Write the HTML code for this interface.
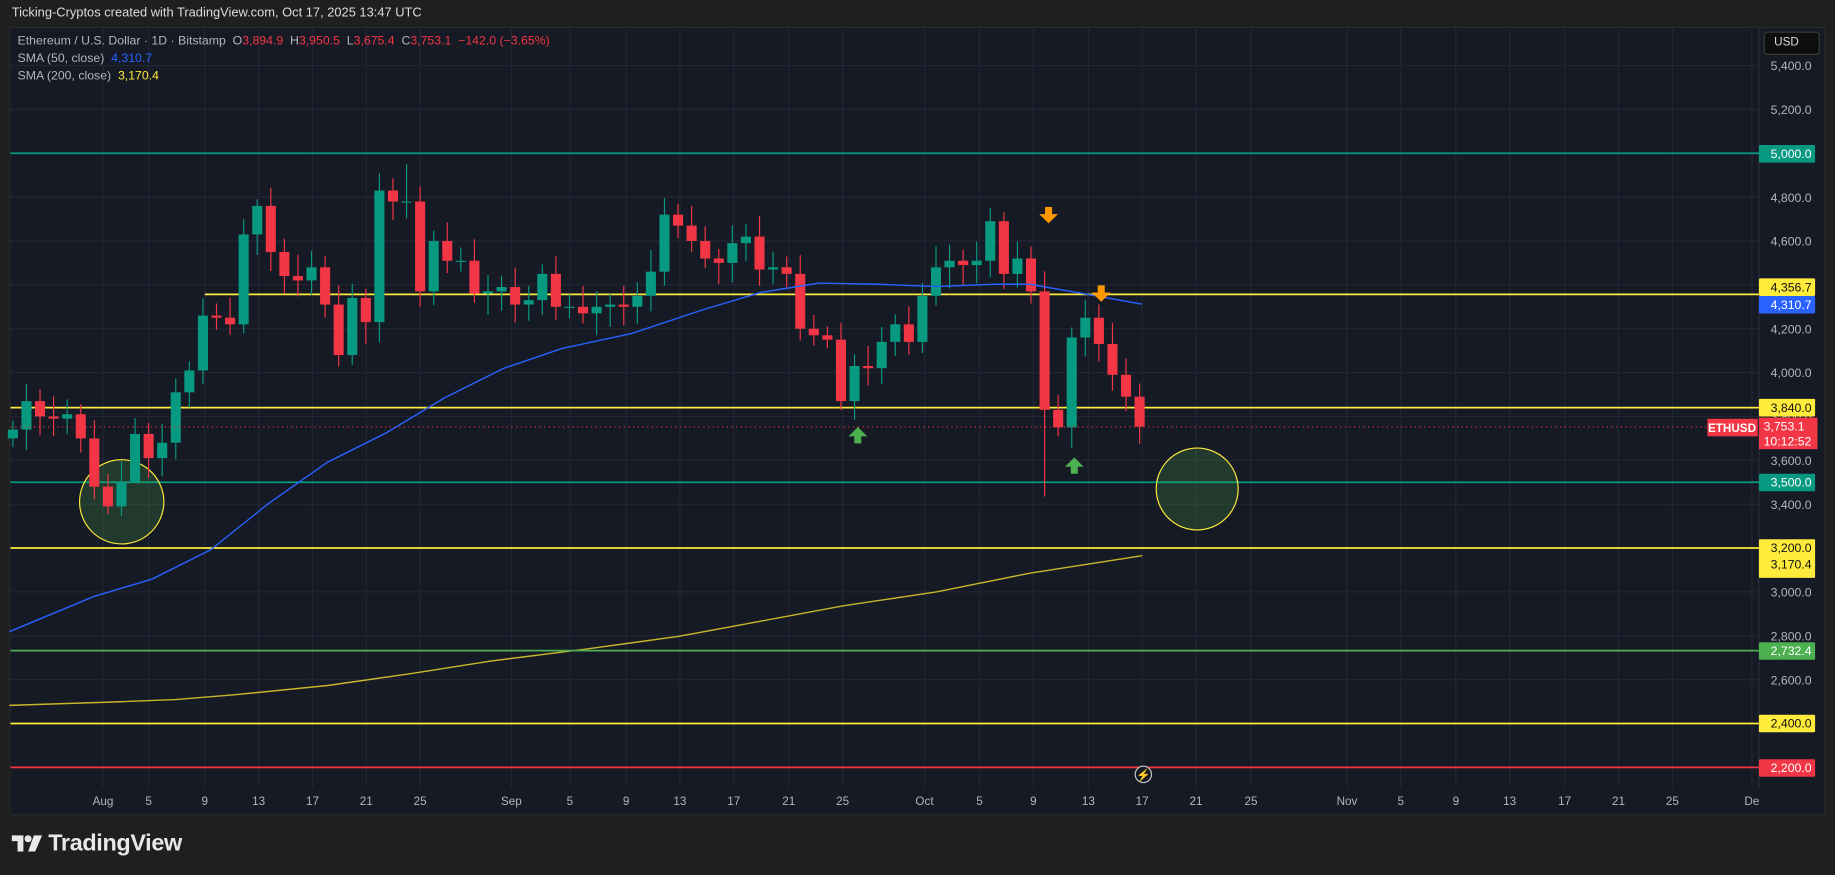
<!DOCTYPE html>
<html><head><meta charset="utf-8">
<style>
html,body{margin:0;padding:0;background:#1f1f1f;width:1835px;height:875px;overflow:hidden}
#w{position:absolute;left:0;top:0;width:1568px;height:748px;transform:scale(1.17028,1.16979);transform-origin:0 0;font-family:"Liberation Sans",sans-serif}
.t{position:absolute;white-space:nowrap}
</style></head><body>
<div id="w">
<div class="t" style="left:10px;top:5px;font-size:11px;color:#dcdcdc">Ticking-Cryptos created with TradingView.com, Oct 17, 2025 13:47 UTC</div>
<div style="position:absolute;left:8px;top:23px;width:1552px;height:674px;background:#161a25;border:1px solid #2a2a2a;box-sizing:border-box"></div>
<svg id="s" style="position:absolute;left:0;top:0" width="1568" height="748" font-family="Liberation Sans, sans-serif"></svg>
<div class="t" style="left:15px;top:29px;font-size:10.5px;color:#b2b5be">Ethereum / U.S. Dollar · 1D · Bitstamp&nbsp; O<span style="color:#f23645">3,894.9</span>&nbsp; H<span style="color:#f23645">3,950.5</span>&nbsp; L<span style="color:#f23645">3,675.4</span>&nbsp; C<span style="color:#f23645">3,753.1&nbsp; −142.0 (−3.65%)</span></div>
<div class="t" style="left:15px;top:44px;font-size:10.5px;color:#b2b5be">SMA (50, close)&nbsp; <span style="color:#2962ff">4,310.7</span></div>
<div class="t" style="left:15px;top:59px;font-size:10.5px;color:#b2b5be">SMA (200, close)&nbsp; <span style="color:#ffeb3b">3,170.4</span></div>
<div class="t" style="left:1507px;top:27px;width:48px;height:20px;background:#0e0e0e;border:1px solid #3a3a3a;border-radius:3px;box-sizing:border-box;color:#ddd;font-size:10px;line-height:18px;padding-left:8px">USD</div>
<div class="t" style="left:10px;top:710px;font-size:20px;font-weight:bold;color:#e8e8e8;letter-spacing:-0.3px">
<svg width="26" height="14" style="vertical-align:-1px" viewBox="0 0 26 14"><path d="M0 0h10v14h-5v-9h-5z" fill="#e8e8e8"/><circle cx="14" cy="3" r="3" fill="#e8e8e8"/><path d="M19 0h7l-6 14h-6z" fill="#e8e8e8"/></svg> TradingView</div>
</div>
<script>
const s=document.getElementById('s');const NS='http://www.w3.org/2000/svg';
function el(t,a,txt){const e=document.createElementNS(NS,t);for(const k in a)e.setAttribute(k,a[k]);if(txt!==undefined)e.textContent=txt;s.appendChild(e);return e}
const Y=p=>131+(5000-p)*0.1875;const X=d=>80.6+d*11.6;
for(let p=2200;p<=5400;p+=200){el('line',{x1:9,x2:1503,y1:Y(p),y2:Y(p),stroke:'#232735','stroke-width':1});}
const tl=[['Aug',88],['5',127],['9',175],['13',221],['17',267],['21',313],['25',359],['Sep',437],['5',487],['9',535],['13',581],['17',627],['21',674],['25',720],['Oct',790],['5',837],['9',883],['13',930],['17',976],['21',1022],['25',1069],['Nov',1151],['5',1197],['9',1244],['13',1290],['17',1337],['21',1383],['25',1429],['De',1497]];
tl.forEach(([t,x])=>{el('line',{x1:x,x2:x,y1:24,y2:673,stroke:'#232735'});el('text',{x:x,y:688,'font-size':10,fill:'#b2b5be','text-anchor':'middle'},t)});
el('line',{x1:1503,x2:1503,y1:24,y2:673,stroke:'#2a2e39'});
el('polyline',{points:'8,603 100,600 150,598 200,594 280,586 350,576 420,565 500,555 580,544 650,531 720,518 800,506 880,490 976,475',fill:'none',stroke:'#c9b52a','stroke-width':1.2});
[[5000,'#089981',9],[4356.7,'#ffeb3b',175],[3840,'#ffeb3b',9],[3500,'#089981',9],[3200,'#ffeb3b',9],[2732.4,'#4caf50',9],[2400,'#ffeb3b',9],[2200,'#f23645',9]].forEach(([p,c,x])=>el('line',{x1:x,x2:1503,y1:Y(p),y2:Y(p),stroke:c,'stroke-width':1.5}));
el('circle',{cx:104,cy:429,r:36,fill:'rgba(76,175,80,0.22)',stroke:'#ffeb3b','stroke-width':1});
el('circle',{cx:1023,cy:418,r:35,fill:'rgba(76,175,80,0.22)',stroke:'#ffeb3b','stroke-width':1});
const c=[3740,3870,3800,3790,3810,3700,3480,3390,3500,3720,3610,3680,3910,4010,4260,4250,4220,4630,4760,4550,4440,4420,4480,4310,4080,4340,4230,4830,4780,4780,4370,4600,4510,4510,4360,4370,4390,4310,4330,4450,4300,4300,4270,4300,4310,4300,4350,4460,4720,4670,4600,4520,4500,4590,4620,4470,4480,4450,4200,4170,4150,3870,4030,4020,4140,4220,4140,4350,4480,4510,4490,4510,4690,4450,4520,4370,3830,3750,4160,4250,4130,3990,3890,3753.1];
const hiO={23:4950,66:4750,43:4770,77:3950,12:4790};const loO={1:3355,70:3435,77:3675,55:3830,3:3570};
let prev=3700;
c.forEach((cl,i)=>{const d=i-6;const o=prev;prev=cl;const up=cl>=o;const col=up?'#089981':'#f23645';
const hi=hiO[d]||Math.max(o,cl)+40+(i*37%60);const lo=loO[d]||Math.min(o,cl)-40-(i*53%60);const x=X(d);
el('line',{x1:x,x2:x,y1:Y(hi),y2:Y(lo),stroke:col,'stroke-width':1});
const y1=Y(Math.max(o,cl)),y2=Y(Math.min(o,cl));el('rect',{x:x-4.3,y:y1,width:8.6,height:Math.max(1,y2-y1),fill:col});});
el('polyline',{points:'8,540 80,510 130,495 180,470 230,430 280,395 330,370 380,340 430,315 480,298 540,285 600,265 650,250 700,242 750,243 800,245 850,243 880,243 920,250 976,260',fill:'none',stroke:'#2962ff','stroke-width':1.2});
el('line',{x1:9,x2:1460,y1:365,y2:365,stroke:'#f23645','stroke-dasharray':'1 3'});
function arr(x,y,down,col){const p=down?`M${x-3},${y-8}h6v6h5l-8,8l-8,-8h5z`:`M${x-3},${y+8}h6v-6h5l-8,-8l-8,8h5z`;el('path',{d:p,fill:col})}
arr(896,185,true,'#ff9800');arr(941,252,true,'#ff9800');arr(733,371,false,'#4caf50');arr(918,397,false,'#4caf50');
el('circle',{cx:977,cy:662,r:7,fill:'#161a25',stroke:'#ccc','stroke-width':1});el('text',{x:977,y:666,'font-size':10,fill:'#ccc','text-anchor':'middle'},'⚡');
for(let p=2200;p<=5400;p+=200){if([5000,3200,2400,2200].includes(p))continue;el('text',{x:1548,y:Y(p)+4,'font-size':10.5,fill:'#b2b5be','text-anchor':'end'},(p/1000).toFixed(3).replace('.',',')+'.0')}
function lab(y,h,bg,fg,t1,t2){el('rect',{x:1503,y:y,width:48,height:h,fill:bg,rx:1});el('text',{x:1548,y:y+11,'font-size':10.5,fill:fg,'text-anchor':'end'},t1);if(t2)el('text',{x:1548,y:y+25,'font-size':10.5,fill:fg,'text-anchor':'end'},t2)}
lab(124,15,'#089981','#fff','5,000.0');lab(238,15,'#ffeb3b','#111','4,356.7');lab(253,15,'#2962ff','#fff','4,310.7');lab(341,15,'#ffeb3b','#111','3,840.0');
lab(405,15,'#089981','#fff','3,500.0');lab(461,33,'#ffeb3b','#111','3,200.0','3,170.4');lab(549,15,'#4caf50','#fff','2,732.4');lab(611,15,'#ffeb3b','#111','2,400.0');lab(649,15,'#f23645','#fff','2,200.0');
el('rect',{x:1503,y:357,width:50,height:27,fill:'#f23645'});el('text',{x:1507,y:368,'font-size':10.5,fill:'#fff'},'3,753.1');el('text',{x:1507,y:381,'font-size':10.5,fill:'#fff'},'10:12:52');
el('rect',{x:1459,y:358,width:43,height:15,fill:'#f23645'});el('text',{x:1480,y:369.5,'font-size':10,fill:'#fff','text-anchor':'middle','font-weight':'bold'},'ETHUSD');
</script>
</body></html>
